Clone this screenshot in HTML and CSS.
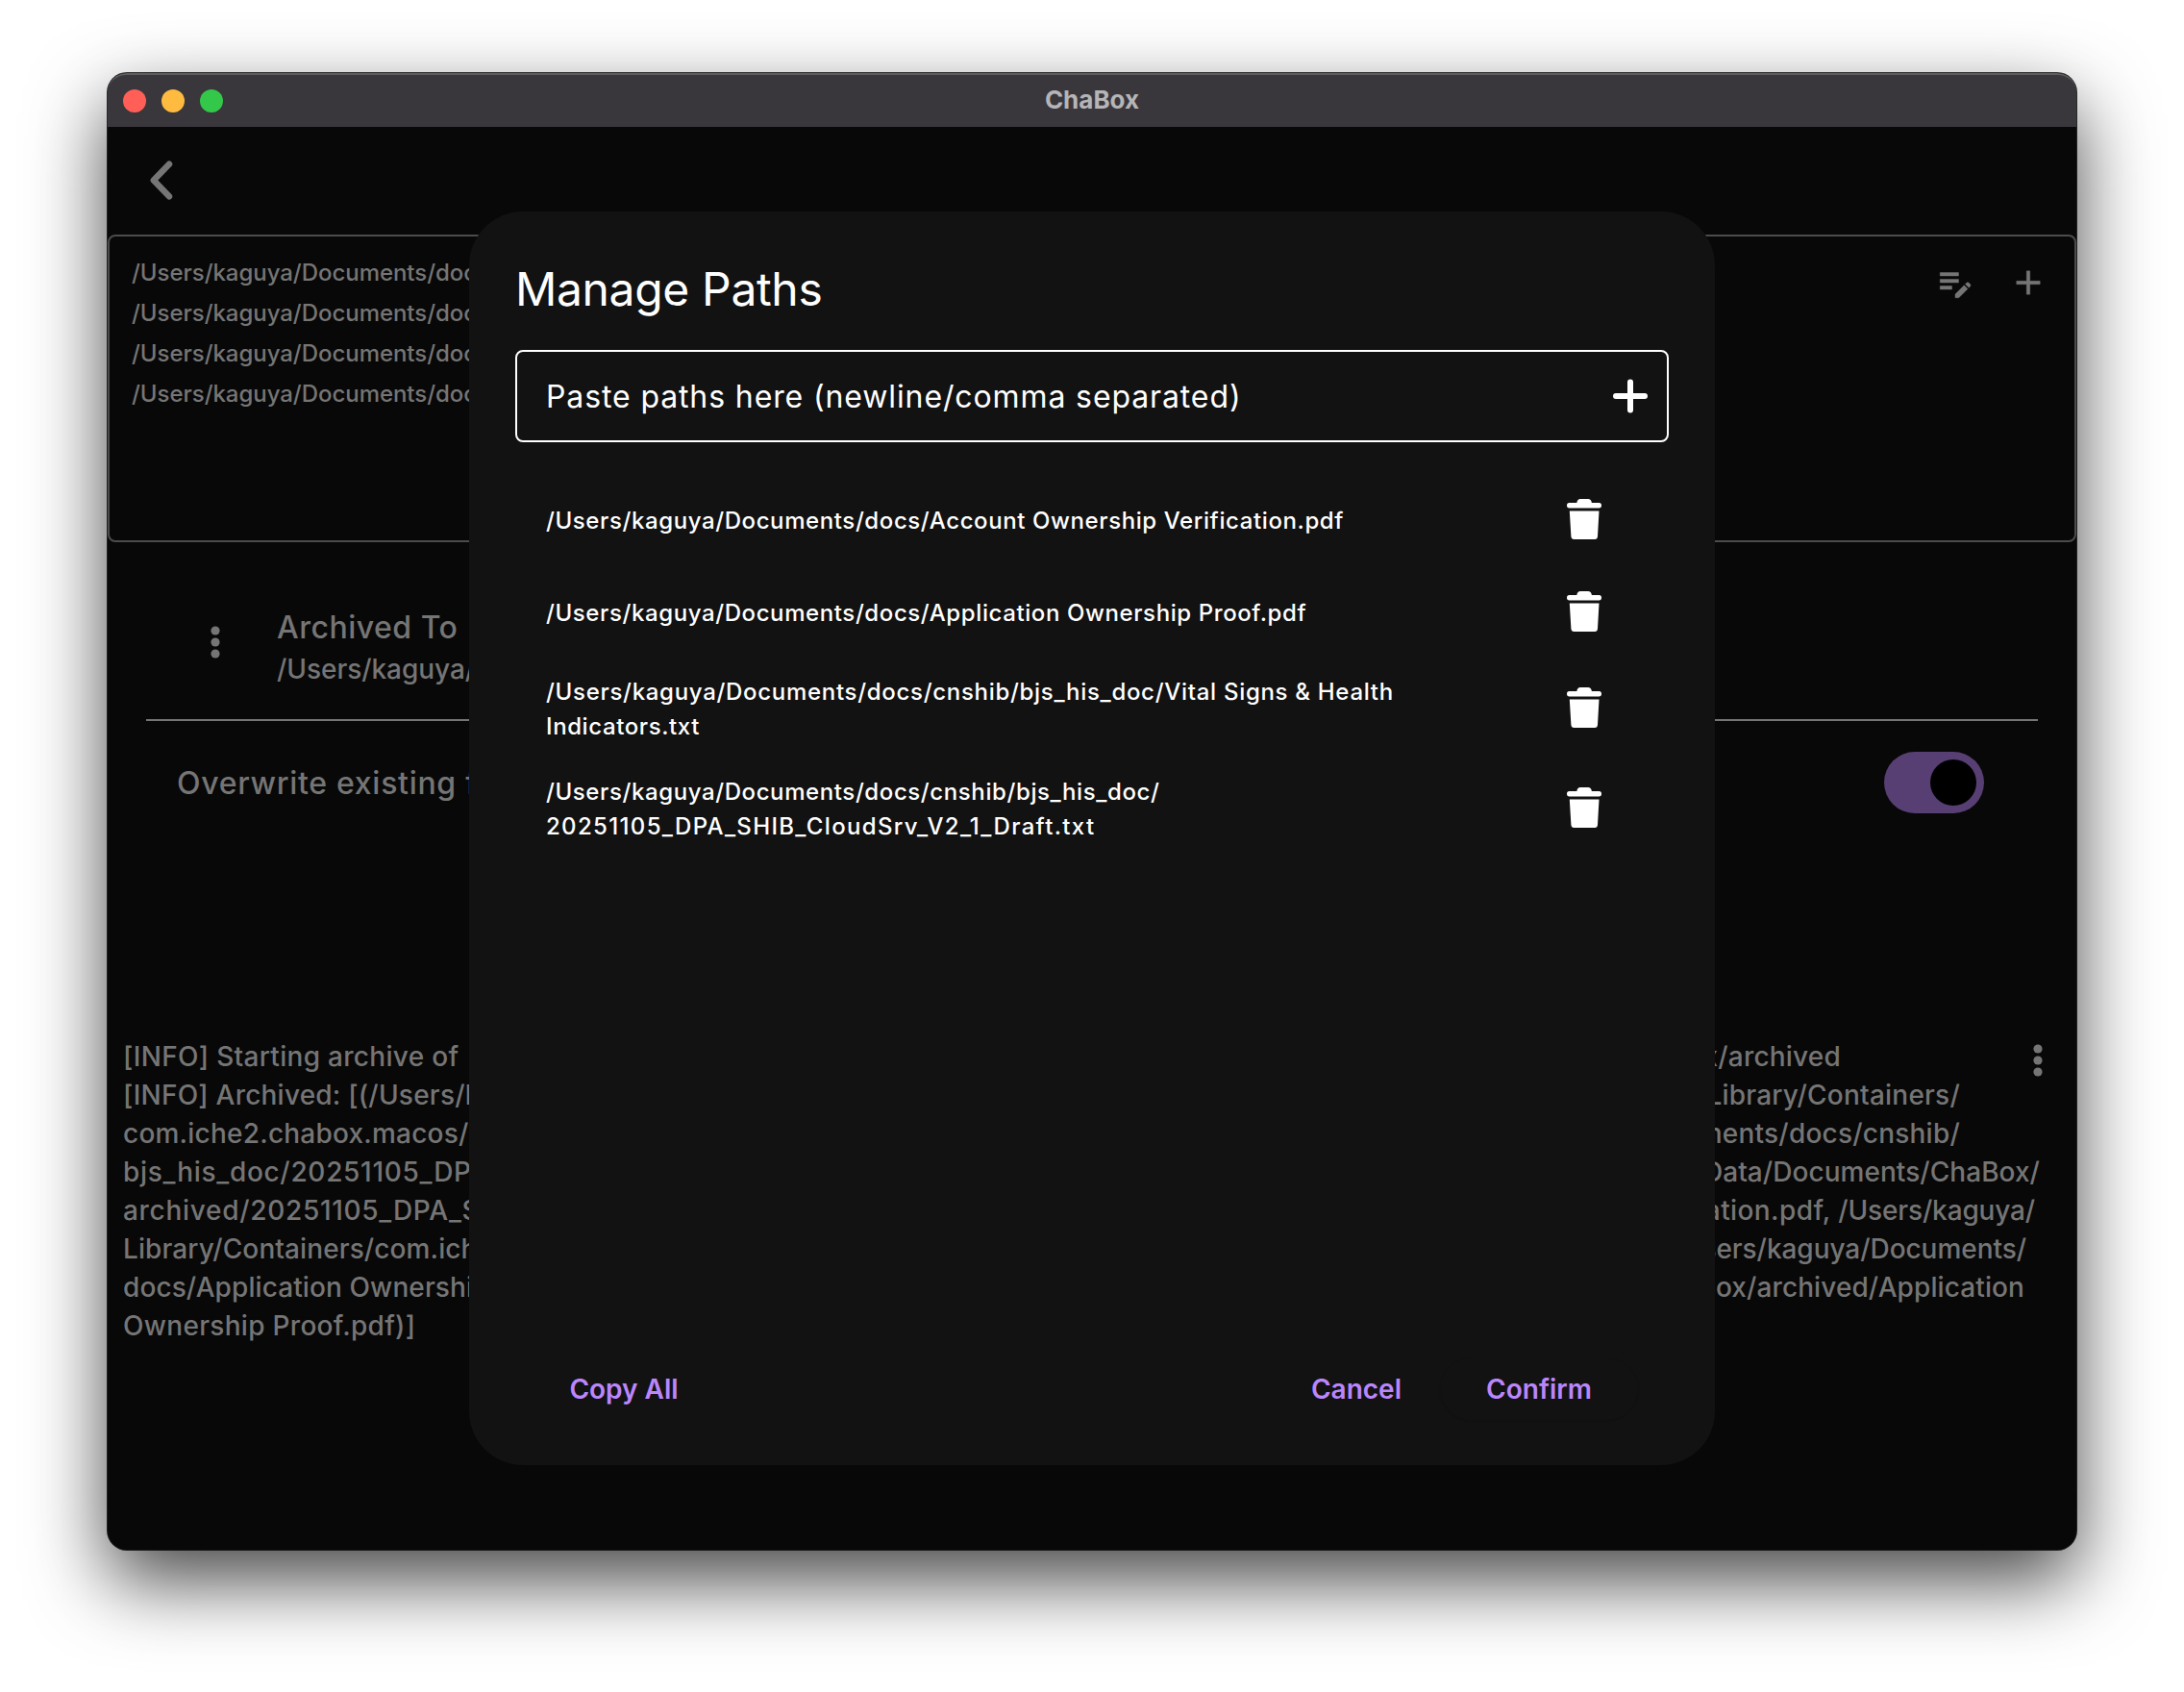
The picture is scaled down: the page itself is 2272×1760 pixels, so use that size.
FILE: index.html
```html
<!DOCTYPE html>
<html lang="en">
<head>
<meta charset="utf-8">
<title>ChaBox</title>
<link rel="stylesheet" href="styles.css">
</head>
<body>
<svg class="defs" width="0" height="0">
  <symbol id="trash" viewBox="0 0 36 42">
    <path d="M10.300 4 Q11 0 14 0 H22 Q25.300 0 25.900 4 H33.500 Q36 4 36 6.800 Q36 9.500 33.500 9.500 H2.500 Q0 9.500 0 6.800 Q0 4 2.500 4Z M2.800 12.500 H33.500 L32 39 Q31.800 42 29 42 H7.500 Q4.600 42 4.400 39Z"/>
  </symbol>
  <symbol id="dots" viewBox="0 0 10 34">
    <circle cx="5" cy="5" r="4.600"/><circle cx="5" cy="17" r="4.600"/><circle cx="5" cy="29" r="4.600"/>
  </symbol>
</svg>
<div class="window">
  <header class="titlebar">
    <div class="lights"><i class="red"></i><i class="yellow"></i><i class="green"></i></div>
    <h1>ChaBox</h1>
  </header>
  <main class="app">
    <nav class="toolbar">
      <svg class="back" width="24" height="42" viewBox="0 0 24 42"><path d="M20 4.700 L3.800 21.500 L20 38.300"/></svg>
    </nav>
    <section class="sources">
      <div class="source-list">
        <p>/Users/kaguya/Documents/docs</p>
        <p>/Users/kaguya/Documents/docs</p>
        <p>/Users/kaguya/Documents/docs</p>
        <p>/Users/kaguya/Documents/docs</p>
      </div>
      <div class="source-actions">
        <svg width="42" height="42" viewBox="0 0 24 24"><path d="M3 10h11v2H3v-2zm0-2h11V6H3v2zm0 8h7v-2H3v2zm15.010-3.130.710-.710a.996.996 0 0 1 1.410 0l.710.710c.390.390.390 1.020 0 1.410l-.710.710-2.120-2.120zm-.710.710-5.300 5.300V21h2.120l5.300-5.300-2.120-2.120z" stroke="currentColor" stroke-width=".25"/></svg>
        <svg width="42" height="42" viewBox="0 0 24 24"><path d="M19 13h-6v6h-2v-6H5v-2h6V5h2v6h6v2z" stroke="currentColor" stroke-width=".2"/></svg>
      </div>
    </section>
    <section class="target">
      <svg width="10" height="34"><use href="#dots"/></svg>
      <div>
        <h2>Archived To</h2>
        <p>/Users/kaguya/Library</p>
      </div>
    </section>
    <section class="overwrite">
      <span>Overwrite existing files</span>
      <span class="switch"><i></i></span>
    </section>
    <section class="log">
      <div class="lines">
        <p class="w1"><span>[INFO] Starting archive of</span><span>ChaBox/archived</span></p>
        <p class="w2"><span>[INFO] Archived: [(/Users/kag</span><span>/Library/Containers/</span></p>
        <p class="w2"><span>com.iche2.chabox.macos/Data</span><span>Documents/docs/cnshib/</span></p>
        <p class="w3"><span>bjs_his_doc/20251105_DPA</span><span>/Data/Documents/ChaBox/</span></p>
        <p class="w4"><span>archived/20251105_DPA_SHIB</span><span>Verification.pdf, <b>/Users/kaguya/</b></span></p>
        <p class="w5"><span>Library/Containers/com.iche2</span><span>/Users/kaguya/Documents/</span></p>
        <p class="w6"><span>docs/Application Ownership</span><span>ChaBox/archived/Application</span></p>
        <p class="w7"><span>Ownership Proof.pdf)]</span></p>
      </div>
      <svg width="10" height="34"><use href="#dots"/></svg>
    </section>
  </main>
  <div class="dialog">
    <h2>Manage Paths</h2>
    <div class="field">
      <span>Paste paths here (newline/comma separated)</span>
      <svg width="36" height="36" viewBox="0 0 36 36"><path d="M18 3.500V32.500M3 18H33"/></svg>
    </div>
    <ul>
      <li><p>/Users/kaguya/Documents/docs/Account Ownership Verification.pdf</p><svg width="36" height="42"><use href="#trash"/></svg></li>
      <li><p>/Users/kaguya/Documents/docs/Application Ownership Proof.pdf</p><svg width="36" height="42"><use href="#trash"/></svg></li>
      <li class="tall"><p><span class="mixed">/Users/kaguya/Documents/docs/cnshib/bjs_his_doc/Vital Signs &amp; Health</span><br>Indicators.txt</p><svg width="36" height="42"><use href="#trash"/></svg></li>
      <li class="tall"><p>/Users/kaguya/Documents/docs/cnshib/bjs_his_doc/<br><span class="digits">20251105_DPA_SHIB_CloudSrv_V2_1_Draft.txt</span></p><svg width="36" height="42"><use href="#trash"/></svg></li>
    </ul>
    <footer>
      <button class="copy">Copy All</button>
      <button class="cancel">Cancel</button>
      <button class="confirm">Confirm</button>
    </footer>
  </div>
</div>
</body>
</html>
```
FILE: styles.css
```css
* { box-sizing: border-box; margin: 0; padding: 0; }
body {
  width: 2272px; height: 1760px; overflow: hidden; background: #fff;
  font-family: Inter, "Liberation Sans", sans-serif; font-weight: 500; color: #757575;
  padding: 76px 112px;
}
.defs { position: absolute; }
svg { display: block; fill: currentColor; flex: none; }
.window {
  position: relative; width: 2048px; height: 1536px; border-radius: 20px;
  background: #080808; display: flex; flex-direction: column;
  box-shadow: 0 0 0 1px rgba(0,0,0,.8), 0 32px 80px rgba(0,0,0,.73);
}
.titlebar {
  height: 56px; display: grid; grid-template-columns: 1fr auto 1fr; align-items: center;
  background: #39373c; border-top: 2px solid #5d5d5f; border-radius: 20px 20px 0 0; padding: 0 16px;
}
.titlebar h1 { font-size: 26px; font-weight: 700; line-height: 30px; color: #b5b4b7; padding-bottom: 3px; }
.lights { display: flex; gap: 16px; }
.lights i { width: 24px; height: 24px; border-radius: 50%; }
.red { background: #ff5f57; }
.yellow { background: #febb40; }
.green { background: #34c84a; }
.app { flex: 1; display: flex; flex-direction: column; }
.toolbar { height: 112px; padding: 34px 0 0 43.5px; }
.back path { fill: none; stroke: #757575; stroke-width: 6.5; stroke-linecap: round; stroke-linejoin: round; }
.sources {
  height: 320px; border: 2px solid #4c4c4c; border-radius: 8px;
  display: flex; justify-content: space-between; padding: 17px 27px 0 23px;
}
.source-list { font-size: 24px; line-height: 42px; letter-spacing: -.04px; }
.source-actions { display: flex; gap: 34px; padding-top: 10px; }
.target {
  height: 186px; margin: 0 40px; border-bottom: 2px solid #757575;
  display: flex; align-items: flex-start; gap: 59px; padding: 67px 0 0 67px;
}
.target svg { margin-top: 20px; }
.target h2 { font-size: 32px; font-weight: 500; line-height: 44px; letter-spacing: .5px; }
.target p { font-size: 28px; line-height: 42px; letter-spacing: -.05px; }
.overwrite {
  height: 128px; display: flex; align-items: center; justify-content: space-between;
  padding: 0 96px 0 72px; font-size: 32px; letter-spacing: .7px;
}
.switch { width: 104px; height: 64px; border-radius: 32px; background: #573f73; padding: 8px; display: flex; justify-content: flex-end; }
.switch i { width: 48px; height: 48px; border-radius: 50%; background: #000; }
.log { display: flex; padding: 200px 0 0 16px; font-size: 28px; line-height: 40px; letter-spacing: .3px; }
.log > svg { margin-top: 8px; }
.lines { width: 1987px; flex: none; padding-top: 1px; }
.lines b { font-weight: inherit; letter-spacing: -.15px; }
.lines p { display: flex; justify-content: space-between; white-space: nowrap; }
.w1 { width: 1787px; }
.w1 span + span { letter-spacing: .2px; }
.w2 { width: 1911px; letter-spacing: .22px; }
.w3 { width: 1994px; letter-spacing: .7px; }
.w3 span + span { letter-spacing: .05px; }
.w4 { width: 1989px; letter-spacing: .7px; }
.w4 span + span { letter-spacing: .4px; }
.w5 { width: 1980px; letter-spacing: .1px; }
.w5 span + span { letter-spacing: -.05px; }
.w6 { width: 1978px; letter-spacing: .1px; }
.dialog {
  position: absolute; left: 376px; top: 144px; width: 1296px; height: 1304px;
  border-radius: 56px; background: #121212; color: #fff; padding: 49px 48px 47px;
  display: flex; flex-direction: column;
}
.dialog h2 { font-size: 48px; font-weight: 400; line-height: 64px; letter-spacing: -.35px; margin-bottom: 31px; }
.field {
  height: 96px; border: 2px solid #fff; border-radius: 8px; padding: 0 20px 0 30px;
  display: flex; align-items: center; justify-content: space-between;
  font-size: 32px; font-weight: 400; letter-spacing: .88px;
}
.field path { fill: none; stroke: #fff; stroke-width: 6; stroke-linecap: round; }
.dialog ul { list-style: none; margin-top: 32px; flex: 1; }
.dialog li {
  height: 96px; display: flex; align-items: center; justify-content: space-between;
  padding: 0 70px 0 32px; font-size: 24px; line-height: 36px; letter-spacing: .6px; white-space: nowrap;
}
.dialog li p { padding-top: 4px; }
.dialog li.tall { height: 104px; }
.dialog .mixed { letter-spacing: .7px; }
.digits { letter-spacing: 1.33px; }
.dialog footer { display: flex; padding: 0 32px; }
button {
  height: 64px; border: 0; border-radius: 32px; background: transparent; color: #bb86fc;
  font: 600 28px Inter, "Liberation Sans", sans-serif; letter-spacing: 0;
}
.copy { width: 162px; margin-right: auto; }
.cancel { width: 140px; margin-right: 17px; }
.confirm { width: 206px; background: #121212; box-shadow: 0 1px 2px rgba(0,0,0,.15); }
```
